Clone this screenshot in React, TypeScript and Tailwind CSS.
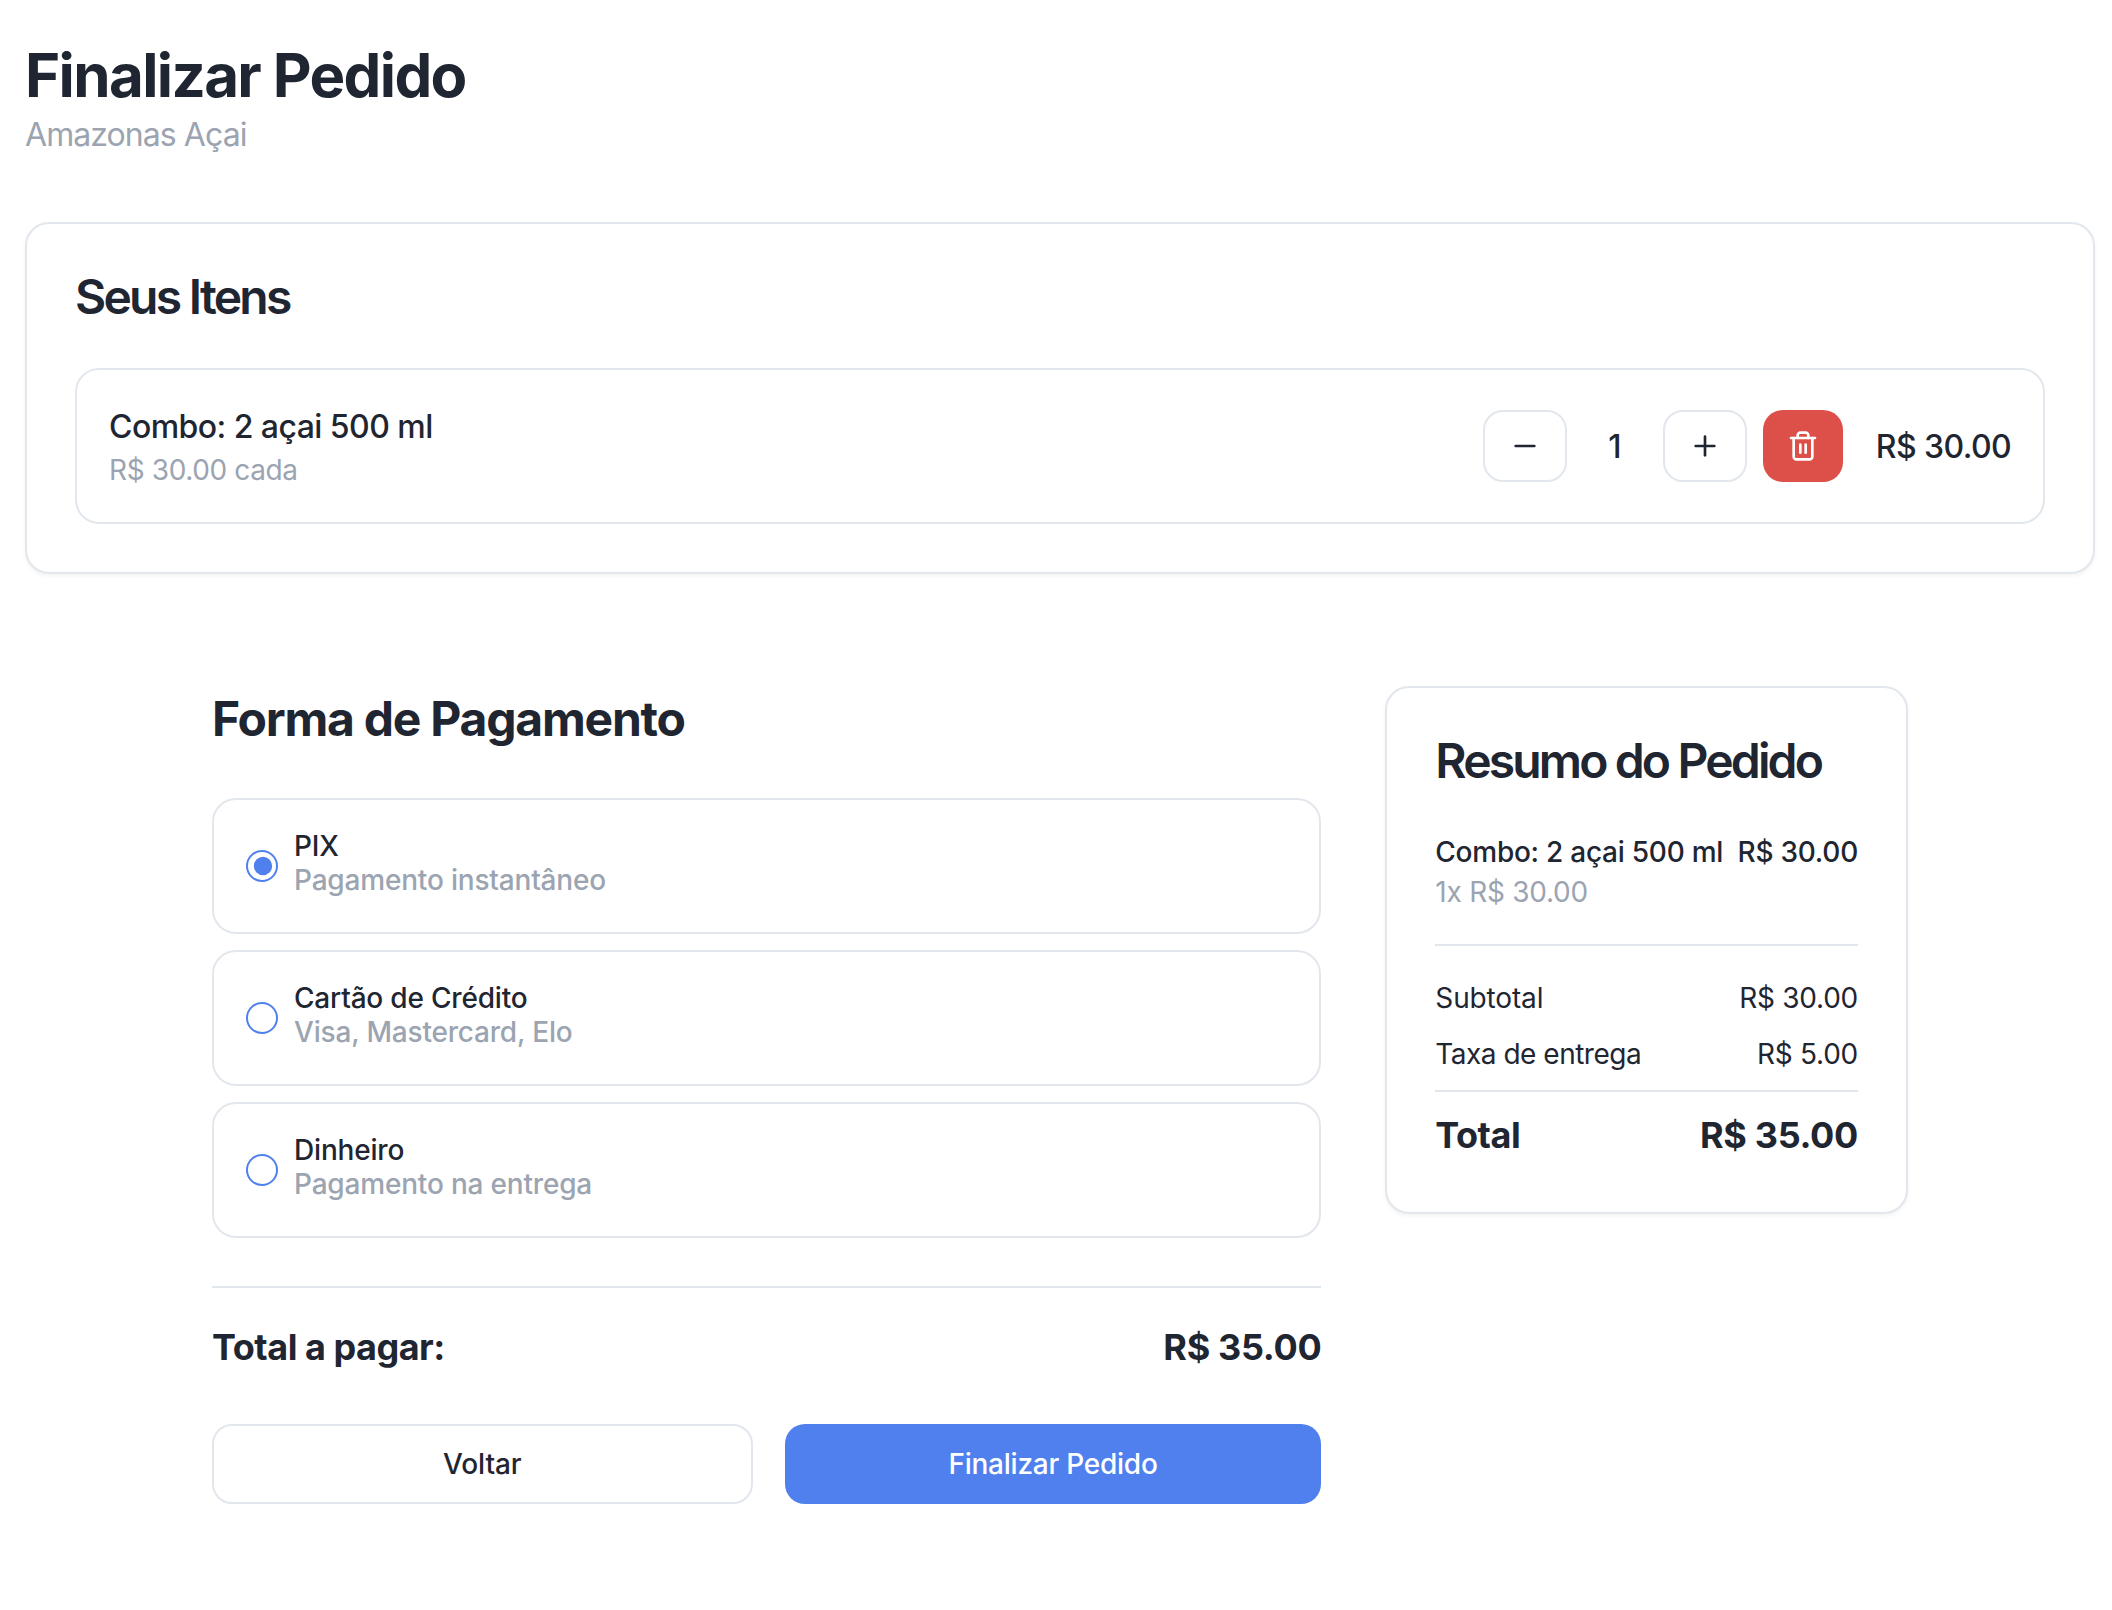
const options = [
  { id: "pix", title: "PIX", hint: "Pagamento instantâneo" },
  { id: "card", title: "Cartão de Crédito", hint: "Visa, Mastercard, Elo" },
  { id: "cash", title: "Dinheiro", hint: "Pagamento na entrega" },
];

function Icon({ paths }: { paths: string[] }) {
  return (
    <svg className="size-8" viewBox="0 0 24 24" fill="none" stroke="currentColor" strokeWidth="2" strokeLinecap="round" strokeLinejoin="round">
      {paths.map((d) => (
        <path key={d} d={d} />
      ))}
    </svg>
  );
}

const minus = ["M5 12h14"];
const plus = ["M5 12h14", "M12 5v14"];
const trash = [
  "M3 6h18",
  "M19 6v14c0 1-1 2-2 2H7c-1 0-2-1-2-2V6",
  "M8 6V4c0-1 1-2 2-2h4c1 0 2 1 2 2v2",
  "M10 11v6",
  "M14 11v6",
];

function ItemsCard() {
  return (
    <section className="mt-[63px] rounded-[24px] border-2 border-[#e2e7ed] bg-white px-12 pt-[49px] pb-12 shadow-[0_2px_4px_rgba(0,0,0,0.05)]">
      <h2 className="text-[48px] leading-[48px] font-semibold tracking-[-2.75px]">Seus Itens</h2>
      <div className="mt-[47px] flex items-center justify-between rounded-[24px] border-2 border-[#e2e7ed] p-8">
        <div>
          <h3 className="-mb-[2px] text-[32px] leading-[50px] font-medium tracking-[-0.55px]">Combo: 2 açai 500 ml</h3>
          <p className="text-[28px] leading-10 tracking-[-0.38px] text-[#9ba4b0]">R$ 30.00 cada</p>
        </div>
        <div className="flex items-center gap-4">
          <button className="flex h-[72px] w-[84px] items-center justify-center rounded-[20px] border-2 border-[#e2e7ed]">
            <Icon paths={minus} />
          </button>
          <span className="w-16 pt-[2px] text-center text-[32px] leading-[48px] font-medium">1</span>
          <button className="flex h-[72px] w-[84px] items-center justify-center rounded-[20px] border-2 border-[#e2e7ed]">
            <Icon paths={plus} />
          </button>
          <button className="flex h-[72px] w-20 items-center justify-center rounded-[20px] bg-[#dc5049] text-white">
            <Icon paths={trash} />
          </button>
          <span className="ml-4 w-[136px] pt-[2px] text-right text-[32px] leading-[48px] font-medium tracking-[-0.6px] whitespace-nowrap">R$ 30.00</span>
        </div>
      </div>
    </section>
  );
}

function Payment() {
  return (
    <section className="col-span-2">
      <h2 className="pt-px text-[48px] leading-[64px] font-bold tracking-[-1.23px]">Forma de Pagamento</h2>
      <div className="mt-[47px] flex flex-col gap-4">
        {options.map((o, i) => (
          <label key={o.id} className="flex h-[136px] items-center gap-4 rounded-[24px] border-2 border-[#e2e7ed] px-8">
            <span className="flex size-8 items-center justify-center rounded-full border-2 border-[#4f80ee]">
              {i === 0 && (
                <svg className="ml-[2px] size-5 text-[#4f80ee]" viewBox="0 0 24 24" fill="currentColor">
                  <circle cx="12" cy="12" r="11" />
                </svg>
              )}
            </span>
            <span className="flex flex-col text-[28px] font-medium tracking-[-0.19px]">
              <span className="leading-7">{o.title}</span>
              <span className="leading-10 text-[#9ba4b0]">{o.hint}</span>
            </span>
          </label>
        ))}
      </div>
      <div className="mt-12 flex justify-between border-t-2 border-[#e2e7ed] pt-[31px] text-[36px] leading-[56px] font-bold">
        <span className="tracking-[-0.48px]">Total a pagar:</span>
        <span className="tracking-[-0.34px]">R$ 35.00</span>
      </div>
      <div className="mt-[49px] flex gap-8 text-[28px] leading-10 font-medium">
        <button className="h-20 flex-1 rounded-[20px] border-2 border-[#e2e7ed] px-8 tracking-[-0.1px]">Voltar</button>
        <button className="h-20 flex-1 rounded-[20px] bg-[#4f80ee] px-8 tracking-[-0.25px] text-white">Finalizar Pedido</button>
      </div>
    </section>
  );
}

function Summary() {
  return (
    <section className="self-start rounded-[24px] border-2 border-[#e2e7ed] bg-white px-12 pt-[49px] pb-12 text-[28px] leading-10 tracking-[-0.25px] shadow-[0_2px_4px_rgba(0,0,0,0.05)]">
      <h2 className="text-[48px] leading-[48px] font-semibold tracking-[-2.85px] whitespace-nowrap">Resumo do Pedido</h2>
      <div className="mt-[47px] flex justify-between whitespace-nowrap">
        <div>
          <p className="font-medium">Combo: 2 açai 500 ml</p>
          <p className="text-[#9ba4b0]">1x R$ 30.00</p>
        </div>
        <span className="font-medium">R$ 30.00</span>
      </div>
      <div className="mt-8 border-t-2 border-[#e2e7ed] pt-8">
        <div className="flex justify-between">
          <span className="tracking-[-0.15px]">Subtotal</span>
          <span>R$ 30.00</span>
        </div>
        <div className="mt-4 flex justify-between">
          <span className="tracking-[-0.5px]">Taxa de entrega</span>
          <span>R$ 5.00</span>
        </div>
        <div className="mt-4 flex justify-between border-t-2 border-[#e2e7ed] pt-[15px] pb-px text-[36px] leading-[56px] font-bold">
          <span className="tracking-[-0.5px]">Total</span>
          <span className="tracking-[-0.34px]">R$ 35.00</span>
        </div>
      </div>
    </section>
  );
}

export default function App() {
  return (
    <div className="min-h-screen bg-white pt-[39px] pr-[17px] pl-[25px] font-[Inter,sans-serif] text-[#1f2631]">
      <h1 className="text-[60px] leading-[72px] font-bold tracking-[-1.63px]">Finalizar Pedido</h1>
      <p className="text-[32px] leading-[48px] tracking-[-0.93px] text-[#9ba4b0]">Amazonas Açai</p>
      <ItemsCard />
      <main className="mt-28 ml-[187px] grid w-[1696px] grid-cols-3 gap-16">
        <Payment />
        <Summary />
      </main>
    </div>
  );
}
